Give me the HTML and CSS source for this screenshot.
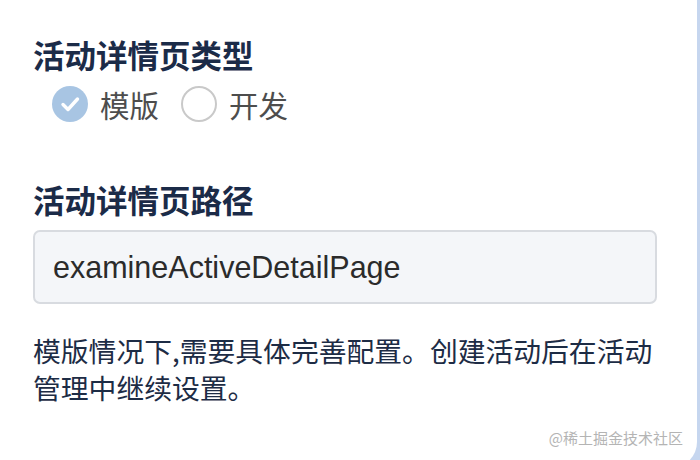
FILE: index.html
```html
<!DOCTYPE html>
<html lang="zh-CN">
<head>
<meta charset="utf-8">
<link rel="stylesheet" href="styles.css">
</head>
<body>
<div class="panel">
  <section class="field">
    <h2 class="label">活动详情页类型</h2>
    <div class="radios">
      <label class="radio">
        <span class="dot dot-on">
          <svg width="36" height="36" viewBox="0 0 36 36"><path d="M11 18.5 L16 23.5 L25.5 13" fill="none" stroke="#fff" stroke-width="3.4" stroke-linecap="round" stroke-linejoin="round"/></svg>
        </span>
        <span class="radio-text">模版</span>
      </label>
      <label class="radio">
        <span class="dot dot-off"></span>
        <span class="radio-text">开发</span>
      </label>
    </div>
  </section>
  <section class="field field-path">
    <h2 class="label">活动详情页路径</h2>
    <div class="input">examineActiveDetailPage</div>
    <p class="hint">模版情况下,需要具体完善配置。创建活动后在活动管理中继续设置。</p>
  </section>
  <div class="watermark">@稀土掘金技术社区</div>
</div>
</body>
</html>
```
FILE: styles.css
```css
html, body {
  margin: 0;
  padding: 0;
}
body {
  width: 700px;
  height: 460px;
  overflow: hidden;
  background: #c6d6ef;
  font-family: "Noto Sans CJK SC", "Liberation Sans", sans-serif;
}
.panel {
  position: relative;
  box-sizing: border-box;
  width: 697px;
  height: 468px;
  background: #fff;
  border-bottom-right-radius: 26px;
  padding: 30px 0 0 33px;
}
.field {
  margin: 0;
}
.label {
  margin: 0;
  font-size: 31.5px;
  line-height: 48px;
  font-weight: 700;
  color: #1b2b48;
}
.radios {
  display: flex;
  align-items: center;
  gap: 22px;
  padding-left: 19px;
  height: 52px;
}
.radio {
  display: flex;
  align-items: center;
  gap: 12px;
}
.dot {
  box-sizing: border-box;
  width: 36px;
  height: 36px;
  border-radius: 50%;
  display: flex;
}
.dot-on {
  background: #a8c5e3;
}
.dot-off {
  border: 2px solid #c9c9c9;
  background: #fff;
}
.radio-text {
  font-size: 29.5px;
  line-height: 40px;
  color: #4d4d4d;
}
.field-path {
  margin-top: 45px;
}
.input {
  box-sizing: border-box;
  margin-top: 7px;
  width: 624px;
  height: 74px;
  border: 2px solid #d8dbe0;
  border-radius: 7px;
  background: #f4f6f9;
  padding: 0 0 0 18px;
  display: flex;
  align-items: center;
  font-family: "Liberation Sans", sans-serif;
  font-size: 30.5px;
  color: #2b2b2b;
}
.hint {
  margin: 28px 0 0;
  width: 630px;
  font-size: 27.8px;
  line-height: 37px;
  color: #1d2c45;
}
.watermark {
  position: absolute;
  right: 14px;
  bottom: 20px;
  font-size: 15px;
  line-height: 20px;
  color: #b4b4b4;
}
```
